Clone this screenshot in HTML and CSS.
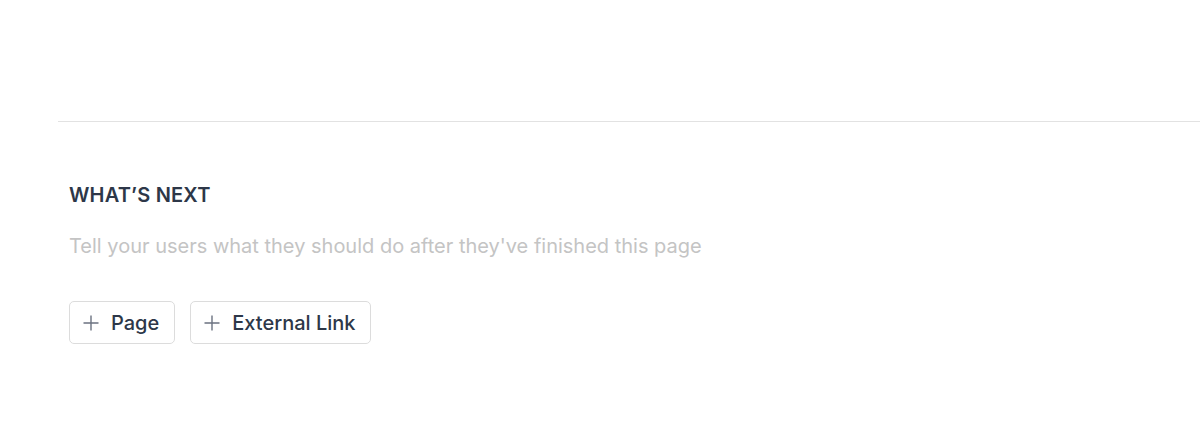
FILE: index.html
```html
<!DOCTYPE html>
<html lang="en">
<head>
  <meta charset="UTF-8">
  <title>What's Next</title>
  <link rel="stylesheet" href="styles.css">
</head>
<body>
  <div class="page">
    <hr class="divider">

    <section class="next">
      <h2 class="next-title">What’s Next</h2>
      <input type="text" class="next-desc" placeholder="Tell your users what they should do after they've finished this page">

      <div class="next-actions">
        <button class="add-btn">
          <svg class="plus" width="16" height="16" viewBox="0 0 16 16"><path d="M8 0.5v15M0.5 8h15" stroke="#6b7280" stroke-width="1.4" fill="none"/></svg>
          Page
        </button>
        <button class="add-btn">
          <svg class="plus" width="16" height="16" viewBox="0 0 16 16"><path d="M8 0.5v15M0.5 8h15" stroke="#6b7280" stroke-width="1.4" fill="none"/></svg>
          External Link
        </button>
      </div>
    </section>
  </div>
</body>
</html>
```

FILE: styles.css
```css
body {
  margin: 0;
  font-family: Inter, "Noto Sans", sans-serif;
  background-color: #fff;
  color: #2d3748;
}

.page {
  padding: 121px 0 0 58px;
}

.divider {
  border: none;
  border-top: 1px solid #e2e2e2;
  margin: 0;
}

.next {
  padding: 61px 0 0 11px;
}

.next-title {
  margin: 0;
  font-size: 20px;
  font-weight: 600;
  text-transform: uppercase;
  letter-spacing: 0.2px;
  color: #2d3748;
  line-height: 24px;
}

.next-desc {
  display: block;
  margin-top: 27px;
  border: none;
  outline: none;
  padding: 0;
  width: 900px;
  font-family: inherit;
  font-size: 20px;
  line-height: 24px;
  color: #2d3748;
}

.next-desc::placeholder {
  color: #c4c4c4;
}

.next-actions {
  display: flex;
  gap: 15px;
  margin-top: 43px;
}

.add-btn {
  display: flex;
  align-items: center;
  gap: 12px;
  height: 43px;
  padding: 0 15px 0 13px;
  background: #fff;
  border: 1px solid #dcdcdc;
  border-radius: 5px;
  font-family: inherit;
  font-size: 20px;
  font-weight: 500;
  color: #2d3748;
  cursor: pointer;
}
```
